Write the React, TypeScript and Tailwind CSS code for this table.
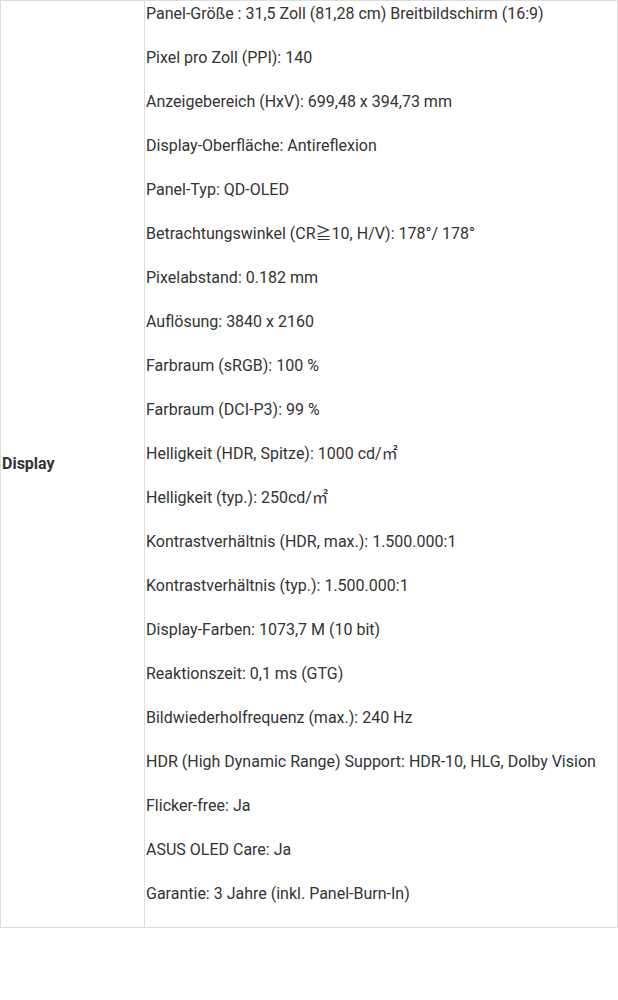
import React from "react";

const lines = [
  "Panel-Größe : 31,5 Zoll (81,28 cm) Breitbildschirm (16:9)",
  "Pixel pro Zoll (PPI): 140",
  "Anzeigebereich (HxV): 699,48 x 394,73 mm",
  "Display-Oberfläche: Antireflexion",
  "Panel-Typ: QD-OLED",
  "Betrachtungswinkel (CR≧10, H/V): 178°/ 178°",
  "Pixelabstand: 0.182 mm",
  "Auflösung: 3840 x 2160",
  "Farbraum (sRGB): 100 %",
  "Farbraum (DCI-P3): 99 %",
  "Helligkeit (HDR, Spitze): 1000 cd/㎡",
  "Helligkeit (typ.): 250cd/㎡",
  "Kontrastverhältnis (HDR, max.): 1.500.000:1",
  "Kontrastverhältnis (typ.): 1.500.000:1",
  "Display-Farben: 1073,7 M (10 bit)",
  "Reaktionszeit: 0,1 ms (GTG)",
  "Bildwiederholfrequenz (max.): 240 Hz",
  "HDR (High Dynamic Range) Support: HDR-10, HLG, Dolby Vision",
  "Flicker-free: Ja",
  "ASUS OLED Care: Ja",
  "Garantie: 3 Jahre (inkl. Panel-Burn-In)",
];

export default function App() {
  return (
    <div
      className="w-[618px] bg-white text-[#333] text-[16px]"
      style={{ fontFamily: 'Roboto, "Noto Sans CJK JP", sans-serif' }}
    >
      <div className="flex border border-[#ddd]">
        <div className="w-[144px] shrink-0 border-r border-[#ddd] flex items-center px-px font-bold">
          Display
        </div>
        <div className="flex-1 px-px pt-px pb-px">
          {lines.map((l) => (
            <p key={l} className="leading-6 mb-5 whitespace-nowrap">
              {l}
            </p>
          ))}
        </div>
      </div>
    </div>
  );
}
